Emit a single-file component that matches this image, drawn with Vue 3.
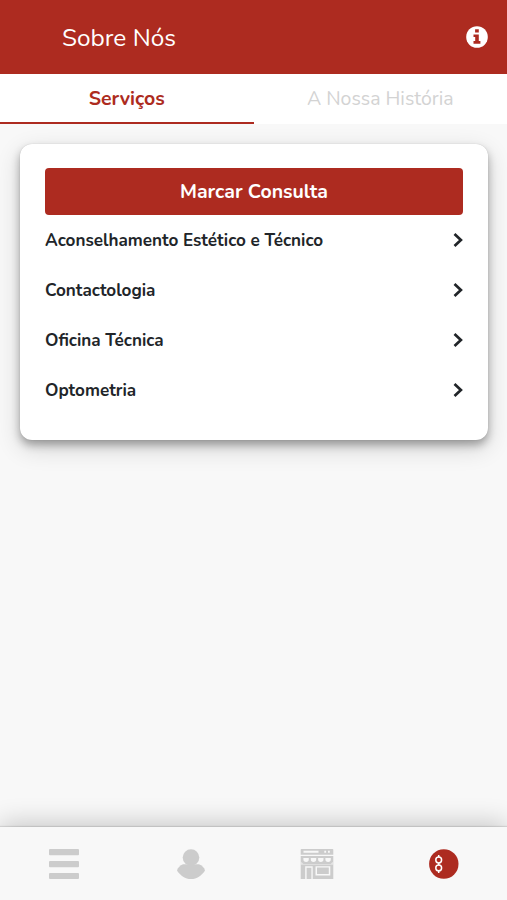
<template>
  <div class="page">
    <header class="top-bar">
      <h1 class="page-title">Sobre Nós</h1>
      <button class="info-button" aria-label="Info">
        <svg viewBox="0 0 22 22" class="info-icon">
          <circle cx="11" cy="11" r="10.8" />
          <path class="info-glyph" d="M9.100 3.300h3.700v3.200H9.100zM7.500 8.400h5.300v6.700h1.600v2.600H7.500v-2.600h1.700v-4.100H7.500z" />
        </svg>
      </button>
    </header>

    <nav class="tabs">
      <button
        v-for="tab in tabs"
        :key="tab.id"
        class="tab"
        :class="{ active: activeTab === tab.id }"
        @click="activeTab = tab.id"
      >
        {{ tab.label }}
      </button>
    </nav>

    <main class="content">
      <section class="card">
        <button class="book-button">Marcar Consulta</button>
        <ul class="service-list">
          <li v-for="service in services" :key="service.id" class="service">
            <span>{{ service.name }}</span>
            <svg viewBox="0 0 10 16" class="chevron">
              <path d="M1.500 2 7.900 8l-6.400 6" />
            </svg>
          </li>
        </ul>
      </section>
    </main>

    <footer class="bottom-nav">
      <!-- Menu -->
      <a class="nav-item">
        <svg viewBox="0 0 30 30" class="nav-icon shifted">
          <rect x="0" y="0" width="30" height="6.3" rx="1" />
          <rect x="0" y="12" width="30" height="6.3" rx="1" />
          <rect x="0" y="24" width="30" height="6" rx="1" />
        </svg>
      </a>
      <!-- Profile -->
      <a class="nav-item">
        <svg viewBox="0 0 30 30" class="nav-icon shifted">
          <circle cx="15" cy="8.500" r="8.300" />
          <path d="M7 15.300H23C26 16.300 28 18.600 29 21.400 25.500 26.700 21 30 15 30S4.500 26.700 1 21.400C2 18.600 4 16.300 7 15.300z" />
        </svg>
      </a>
      <!-- Shop -->
      <a class="nav-item">
        <svg viewBox="0 0 34 30" class="nav-icon shop">
          <path fill-rule="evenodd" d="M1.500 0h31a.8.8 0 0 1 .8.8v4.900H.7V.8a.8.8 0 0 1 .8-.8zM3.500 1.800v1.900h15V1.800zM24.300 1.800v1.900h1.800V1.800zM28 1.800v1.900h1.800V1.800z" />
          <path d="M.7 7h32.600v23H.7z" />
          <g class="cutout">
            <path d="M3.400 9h5.400v1.200a2.700 2.700 0 0 1-5.400 0zM10.800 9h5.400v1.200a2.700 2.700 0 0 1-5.400 0zM18.100 9h5.400v1.200a2.700 2.700 0 0 1-5.400 0zM25.400 9h5.400v1.200a2.700 2.700 0 0 1-5.400 0z" />
            <path d="M.7 12.600 3.500 15h27l2.800-2.400v3.200H.7z" opacity="0.55" />
            <path fill-rule="evenodd" d="M5.200 17.200h7.500V30h-1.300V18.700H6.600V30H5.200zM15.500 17.200h14.800v9.200H15.500zM17 18.600v6.300h11.800v-6.300z" />
          </g>
        </svg>
      </a>
      <!-- About, current page -->
      <a class="nav-item">
        <svg viewBox="0 0 30 30" class="nav-icon brand">
          <circle cx="14.800" cy="15" r="14.700" />
          <g class="glasses">
            <circle cx="9.700" cy="11" r="2.900" />
            <circle cx="9.700" cy="18.900" r="2.900" />
            <path d="M9.700 6v2.200M9.700 13.700v2.600M9.700 21.800V24" />
          </g>
        </svg>
      </a>
    </footer>
  </div>
</template>

<script setup>
import { ref } from 'vue'

const activeTab = ref('servicos')

const tabs = [
  { id: 'servicos', label: 'Serviços' },
  { id: 'historia', label: 'A Nossa História' },
]

const services = [
  { id: 'aconselhamento', name: 'Aconselhamento Estético e Técnico' },
  { id: 'contactologia', name: 'Contactologia' },
  { id: 'oficina', name: 'Oficina Técnica' },
  { id: 'optometria', name: 'Optometria' },
]
</script>

<style>
body {
  margin: 0;
  background-color: #f8f8f8;
}
</style>

<style scoped>
.page {
  display: flex;
  flex-direction: column;
  height: 100vh;
  overflow: hidden;
  background-color: #f8f8f8;
  font-family: 'Nunito', 'Lato', sans-serif;
  color: #212529;
}

button {
  border: none;
  padding: 0;
  background: none;
  font-family: inherit;
  cursor: pointer;
}

.top-bar {
  display: flex;
  align-items: center;
  justify-content: space-between;
  height: 74px;
  flex-shrink: 0;
  box-sizing: border-box;
  padding: 0 19.5px 0 62px;
  background-color: #ad2b20;
}

.page-title {
  margin: 0;
  padding-top: 2px;
  font-size: 24.4px;
  font-weight: 400;
  color: #fff;
}

.info-button {
  display: flex;
}

.info-icon {
  width: 22px;
  height: 22px;
  fill: #fff;
}

.info-glyph {
  fill: #ad2b20;
}

.tabs {
  display: flex;
  height: 50px;
  flex-shrink: 0;
  background-color: #fff;
}

.tab {
  flex: 1;
  box-sizing: border-box;
  border-bottom: 2px solid transparent;
  font-size: 19.5px;
  color: #d3d3d3;
}

.tab.active {
  border-bottom-color: #ad2b20;
  font-weight: 700;
  color: #ad2b20;
}

.content {
  flex: 1;
  padding: 20px 19px 0 20px;
}

.card {
  height: 296px;
  box-sizing: border-box;
  padding: 24px 25px;
  border-radius: 12px;
  background-color: #fff;
  box-shadow: 0 0 1px rgba(0, 0, 0, 0.2), 0 5px 9px rgba(0, 0, 0, 0.3), 0 8px 24px rgba(0, 0, 0, 0.16);
}

.book-button {
  display: block;
  width: 100%;
  height: 47px;
  border-radius: 4px;
  background-color: #ad2b20;
  font-size: 19.5px;
  font-weight: 700;
  color: #fff;
}

.service-list {
  margin: 0;
  padding: 0;
  list-style: none;
}

.service {
  display: flex;
  align-items: center;
  justify-content: space-between;
  height: 50px;
  font-size: 17.1px;
  font-weight: 700;
}

.chevron {
  width: 10px;
  height: 16px;
  fill: none;
  stroke: #212529;
  stroke-width: 2.7;
}

.bottom-nav {
  display: flex;
  height: 73px;
  flex-shrink: 0;
  background-color: #f8f8f8;
  box-shadow: 0 -1px 1px rgba(0, 0, 0, 0.1), 0 -4px 26px rgba(0, 0, 0, 0.2);
}

.nav-item {
  display: flex;
  flex: 1;
  align-items: center;
  justify-content: center;
}

.nav-icon {
  width: 30px;
  height: 30px;
  fill: #ccc;
}

.shifted {
  margin-left: 1.5px;
}

.shop {
  width: 34px;
}

.cutout {
  fill: #f8f8f8;
}

.brand {
  fill: #ad2b20;
}

.glasses {
  fill: none;
  stroke: #fff;
  stroke-width: 1.5;
}
</style>
